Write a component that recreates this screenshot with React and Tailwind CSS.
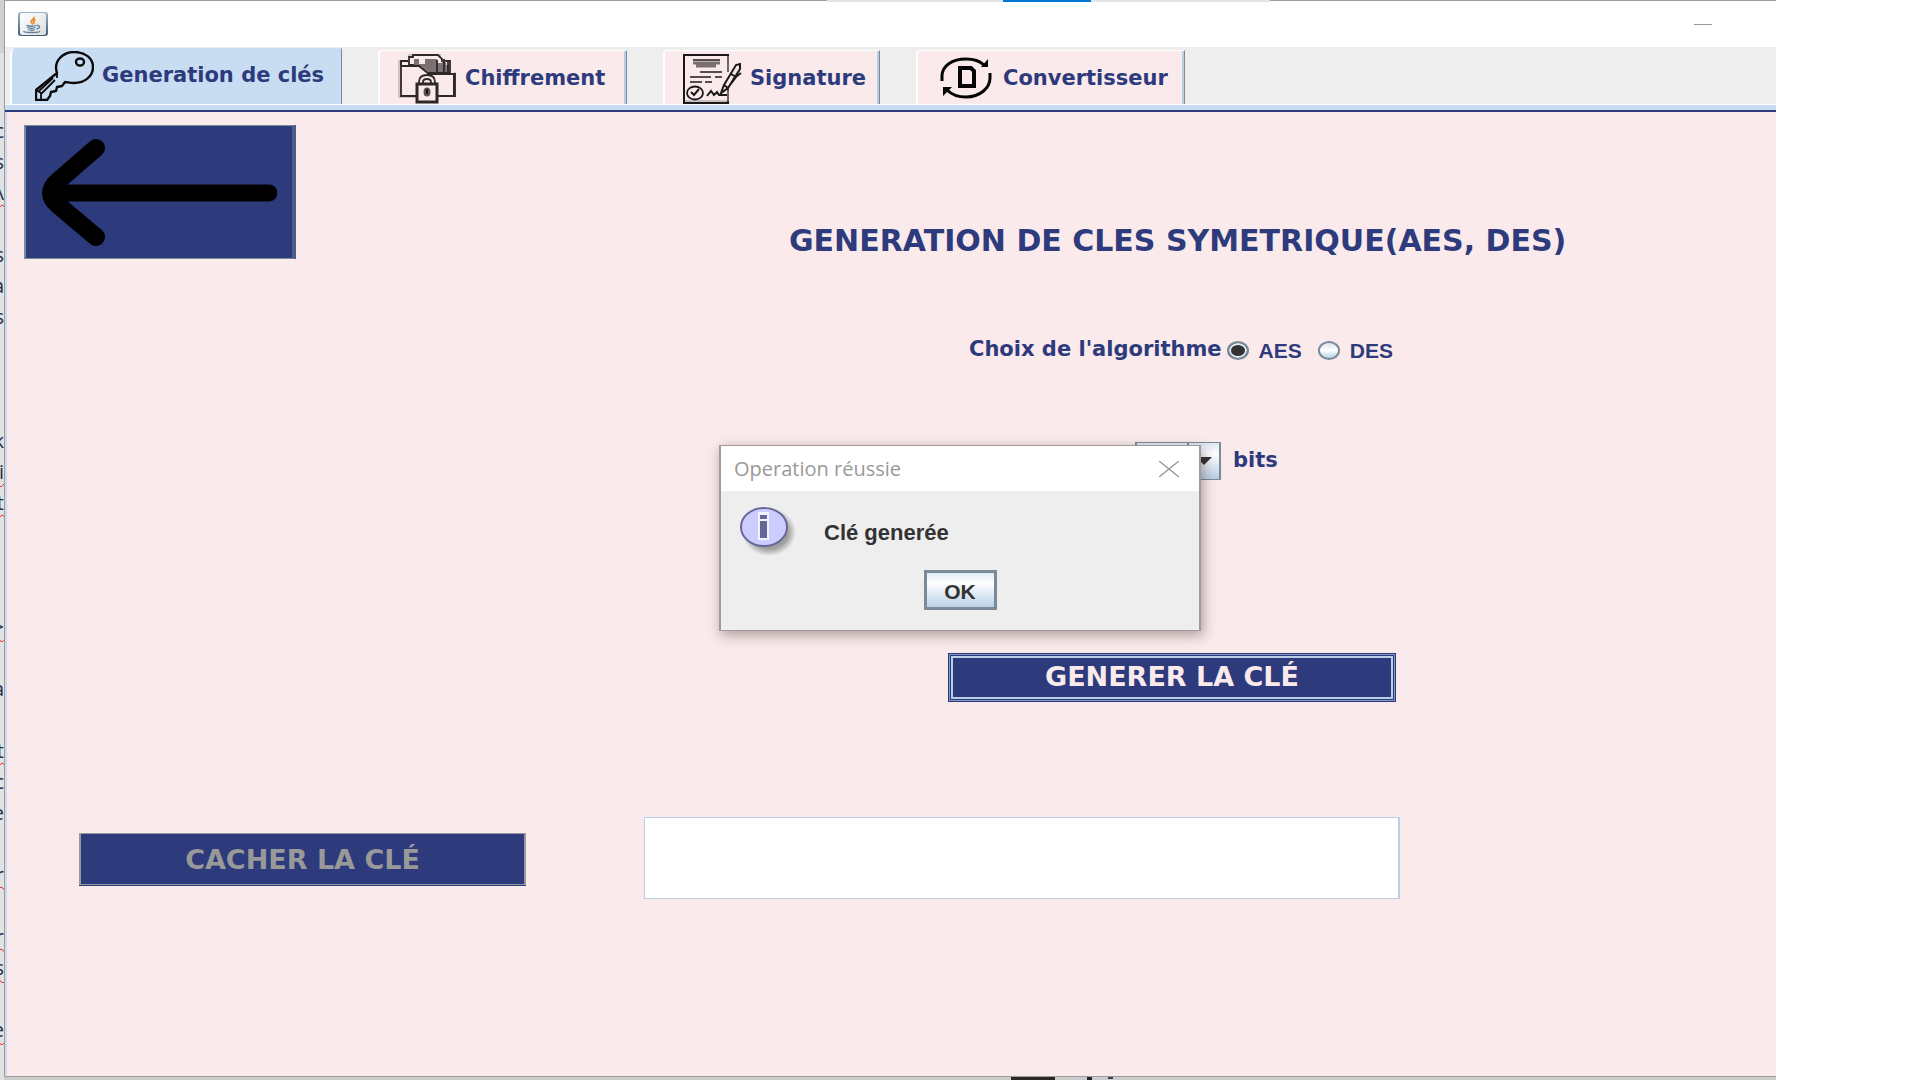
import React, { useState } from 'react';

function JavaIcon() {
  return (
    <svg width="30" height="24" viewBox="0 0 30 24" aria-hidden="true">
      <defs>
        <linearGradient id="java-frame" x1="0" y1="0" x2="0" y2="1">
          <stop offset="0" stopColor="#9db8ce" />
          <stop offset="1" stopColor="#3f5b75" />
        </linearGradient>
        <linearGradient id="java-face" x1="0" y1="0" x2="1" y2="1">
          <stop offset="0" stopColor="#ffffff" />
          <stop offset="1" stopColor="#dcdcdc" />
        </linearGradient>
      </defs>
      <rect width="30" height="24" rx="3" fill="url(#java-frame)" />
      <rect x="2" y="1" width="26" height="22" rx="2" fill="url(#java-face)" />
      <path d="M15.500 5c2 2-3.500 3-2 5.500l1.500 2M17.500 7.500c-3 1.500-1.500 2.500-1 4" fill="none" stroke="#f08a2c" strokeWidth="1.800" />
      <path d="M8.500 13.500q6 1.500 9.500 0M9 15.500q5 1.500 8.500 0M10 17.500q4 1.500 7 0M18.500 13.500c4-1 4 2.500 0 3.500M6 19q-1 1.500 8 1.500t7.500-1.500" fill="none" stroke="#5b7f9c" strokeWidth="1.300" />
    </svg>
  );
}

function KeyIcon() {
  return (
    <svg width="59" height="50" viewBox="0 0 59 50" fill="none" stroke="#0b0b0b" strokeWidth="2.400" strokeLinejoin="round" aria-hidden="true">
      <path d="M22 22C18 10 28 1 39 1s19 6 19 15-8 16-19 16c-4 0-7-1-9-1l-3 4-5 1-1 4-5 1-1 4-3 4H1V39Z" />
      <path d="M22 22v5M18 27 4 40M20 29 6 43v5M1 39l5 3" strokeWidth="1.800" />
      <ellipse cx="45" cy="11" rx="4" ry="3.500" />
    </svg>
  );
}

function FolderLockIcon() {
  return (
    <svg width="59" height="50" viewBox="0 0 59 50" fill="none" stroke="#2e2829" strokeWidth="1.800" aria-hidden="true">
      <path d="M1 6v37h17M57 18v25M10 1h33" stroke="#cfc3c4" strokeWidth="2" />
      <path d="M11 11V3h4V1h25l4 4v2h8v12H29L20 11Z" fill="#faeaeb" />
      <path d="M16 5h5v5h6V5h12v4h5V7h4v4h3v7H30l-7-6h-7Z" fill="#7b7072" stroke="none" />
      <path d="M39 6v12M46 5v13M50 8v10" />
      <path d="M3 42V12h18l10 8h26v22Z" fill="#faeaeb" />
      <path d="M3 12V7h7M56 19v23" strokeWidth="2" />
      <path d="M21 31v-3q0-7 8-7t8 7v3M25 31v-3q0-3 4-3t4 3v3" fill="#faeaeb" />
      <rect x="19" y="30" width="20" height="18" fill="#faeaeb" strokeWidth="3" />
      <ellipse cx="29" cy="38" rx="3.500" ry="4.500" fill="#5b5254" stroke="none" />
      <path d="M29 35v5" stroke="#1b1718" strokeWidth="2" />
    </svg>
  );
}

function SignatureIcon() {
  return (
    <svg width="59" height="50" viewBox="0 0 59 50" fill="none" stroke="#1c1819" strokeWidth="2" aria-hidden="true">
      <path d="M45 18V1H1v48h44V35" />
      <path d="M2 47h42" stroke="#c9bfc0" strokeWidth="2" />
      <path d="M45 2v16M45 36v11" stroke="#6f6667" strokeWidth="2" />
      <g stroke="#544c4e">
        <path d="M10 6h27" strokeWidth="2" />
        <path d="M10 9h27M13 12h20" stroke="#7a7072" strokeWidth="3" />
        <path d="M17 18h22M7 23h21M32 23h7M7 28h12M22 28h7" strokeWidth="2" />
      </g>
      <ellipse cx="12" cy="39" rx="8" ry="6.500" strokeWidth="1.800" />
      <path d="m8 38 3 3 5-6M24 42l4-5 3 4 3-3 2 3h8" strokeWidth="2" />
      <path d="m38 39 3-8L53 11l4-1v5L45 34ZM41 31l4 3M48 20l5 3-9 12M50 25l8-6" fill="#faeaeb" strokeWidth="2" />
    </svg>
  );
}

function ConvertIcon() {
  return (
    <svg width="59" height="50" viewBox="0 0 59 50" fill="none" stroke="#050505" strokeWidth="3" aria-hidden="true">
      <path d="M6 22C6 12 16 5 30 5c8 0 14 2 18 6M54 24c0 10-10 19-24 19-8 0-15-3-19-7M6 21v6M54 19v6" />
      <path d="M45 13h7V5ZM7 33h9l-9 9Z" fill="#050505" stroke="none" />
      <path d="M24 14h11l3 3v15H24Z" strokeWidth="4" />
    </svg>
  );
}

function ArrowIcon() {
  return (
    <svg width="236" height="108" viewBox="0 0 236 108" fill="none" stroke="#000" strokeWidth="18" strokeLinecap="round" strokeLinejoin="round" aria-hidden="true">
      <path d="M55 10 17 43Q3 55 17 67L55 99" />
      <path d="M14 55H228" strokeWidth="17" />
    </svg>
  );
}

function InfoIcon() {
  return (
    <svg width="56" height="50" viewBox="0 0 56 50" aria-hidden="true">
      <defs>
        <radialGradient id="info-shadow">
          <stop offset="0.700" stopColor="#8a8a8a" stopOpacity="0.800" />
          <stop offset="1" stopColor="#8a8a8a" stopOpacity="0" />
        </radialGradient>
      </defs>
      <ellipse cx="29" cy="25" rx="27" ry="24" fill="url(#info-shadow)" />
      <ellipse cx="24" cy="20" rx="23" ry="19" fill="#ccccff" stroke="#666699" strokeWidth="2" />
      <path d="M18 5h11v8H18zM18 13h11v20H18z" fill="#f2f2ff" />
      <path d="M20 8h7v4h-7zM20 14h7v17h-7z" fill="#666699" />
    </svg>
  );
}

const tabs = [
  { label: 'Generation de clés', Icon: KeyIcon, width: 'w-[332px]' },
  { label: 'Chiffrement', Icon: FolderLockIcon, width: 'w-[249px]' },
  { label: 'Signature', Icon: SignatureIcon, width: 'w-[217px]' },
  { label: 'Convertisseur', Icon: ConvertIcon, width: 'w-[269px]' },
];

const editorLines = [
  ['c'], ['s'], ['\\', 1], [''], ['s'], ['a'], ['s'], [''], [''], [''],
  ['k'], ['i', 1], ['t', 1], [''], [''], [''], ['>', 1], [''], ['a'], [''],
  ['t', 1], ['c'], ['e'], [''], ['r', 1], [''], ['r', 1], ['s', 1], [''], ['e', 1],
];

function EditorEdge() {
  return (
    <div className="w-1 shrink-0 overflow-hidden bg-[#e2e2e2]" aria-hidden="true">
      <div className="mb-[62px] h-[53px] bg-[#cfd1d4]" />
      {editorLines.map(([char, misspelt], i) => (
        <div key={i} className="flex h-[31px] justify-end overflow-hidden font-['Open_Sans',sans-serif] text-[20px] font-medium leading-[32px] text-[#26304a]">
          <span className={misspelt ? 'underline decoration-[#ee1111] decoration-wavy decoration-1 underline-offset-4' : ''}>{char}</span>
        </div>
      ))}
    </div>
  );
}

function TabBar({ active, onSelect }) {
  return (
    <div role="tablist" className="flex h-[57px] items-end gap-9 bg-[#eeeeee] pl-[5px]">
      {tabs.map(({ label, Icon, width }, i) => (
        <button
          key={label}
          type="button"
          role="tab"
          aria-selected={i === active}
          onClick={() => onSelect(i)}
          className={`flex shrink-0 items-center gap-2 whitespace-nowrap border-l-2 border-t border-r border-white border-r-[#7a8a99] ${width} ${
            i === active
              ? 'h-14 rounded-tl-md border-t-[#c8ddf2] bg-[#c8ddf2] pb-[2px] pl-[23px]'
              : 'h-[54px] rounded-tl-sm bg-[#faeaeb] pl-[18px] pt-[2px] shadow-[inset_-2px_0_0_#b8cfe5]'
          }`}
        >
          <Icon />
          <span>{label}</span>
        </button>
      ))}
    </div>
  );
}

function AlgorithmRadio({ label, checked, onChange }) {
  return (
    <label className="flex items-center gap-[10px] pt-[3px] font-['Liberation_Sans',sans-serif] text-[21px]">
      <input
        type="radio"
        name="algorithm"
        checked={checked}
        onChange={onChange}
        className="h-[19px] w-[22px] appearance-none rounded-[50%] border-2 border-[#7a8a99] bg-linear-to-b from-[#dbe6f1] via-white to-[#b8cfe5] checked:bg-none checked:bg-[#333333] checked:shadow-[inset_0_0_0_2px_#e4edf6]"
      />
      {label}
    </label>
  );
}

function ResultDialog() {
  return (
    <div role="dialog" aria-labelledby="dialog-title" className="absolute left-[712px] top-[333px] w-[482px] border-2 border-t border-b border-[#9f9a9b] bg-[#eeeeee] shadow-[2px_4px_12px_rgba(60,30,30,0.4)]">
      <div className="flex h-[45px] items-center justify-between bg-white pl-[13px] pr-5">
        <h2 id="dialog-title" className="font-['Open_Sans',sans-serif] text-[20px] font-normal text-[#999999]">Operation réussie</h2>
        <button type="button" aria-label="Fermer">
          <svg width="20" height="16" viewBox="0 0 20 16" stroke="#8f8f8f" strokeWidth="1.300" aria-hidden="true">
            <path d="m0 0 20 16M20 0 0 16" />
          </svg>
        </button>
      </div>
      <div className="flex h-[79px] gap-7 pl-[19px] pt-4 font-['Liberation_Sans',sans-serif] font-bold text-[#333333]">
        <InfoIcon />
        <p className="pt-3 text-[22px] leading-[28px]">Clé generée</p>
      </div>
      <div className="flex justify-center pb-5">
        <button type="button" className="h-10 w-[73px] border-2 border-[#7a8a99] bg-linear-to-b from-[#dde8f3] via-white via-30% to-[#b8cfe5] pt-1 font-['Liberation_Sans',sans-serif] text-[21px] leading-[32px] font-bold text-[#333333] shadow-[inset_0_0_0_1px_#7a8a99]">
          OK
        </button>
      </div>
    </div>
  );
}

function KeyGenerationPanel() {
  const [algorithm, setAlgorithm] = useState('AES');
  return (
    <main className="relative flex-1 border-l-2 border-[#c8ddf2] bg-[#faeaeb] pt-[13px]">
      <div className="flex items-end pl-[17px]">
        <button type="button" aria-label="Retour" className="flex h-[134px] w-[272px] shrink-0 items-center justify-center border-2 border-y border-r-4 border-[#7a8a99] border-r-[#4b5b8a] bg-[#2d3a7c]">
          <ArrowIcon />
        </button>
        <h1 className="ml-[493px] whitespace-nowrap text-[30px] leading-[36px]">GENERATION DE CLES SYMETRIQUE(AES, DES)</h1>
      </div>

      <div role="radiogroup" aria-labelledby="algorithm-label" className="mt-[73px] flex items-center pl-[962px]">
        <span id="algorithm-label" className="pr-[5px] leading-[32px]">Choix de l'algorithme</span>
        <div className="flex gap-4">
          <AlgorithmRadio label="AES" checked={algorithm === 'AES'} onChange={() => setAlgorithm('AES')} />
          <AlgorithmRadio label="DES" checked={algorithm === 'DES'} onChange={() => setAlgorithm('DES')} />
        </div>
      </div>

      <div className="mt-[75px] flex items-center gap-3 pl-[1128px]">
        <div className="flex border-2 border-y border-[#7a8a99] bg-linear-to-b from-[#dde8f3] via-white via-30% to-[#b8cfe5]">
          <select id="key-size" className="h-9 w-[52px] appearance-none border-r-2 border-[#7a8a99] text-transparent">
            <option value="128" aria-label="128" />
          </select>
          <svg width="30" height="36" viewBox="0 0 30 36" aria-hidden="true">
            <path d="M7 14h16l-8 8Z" fill="#333333" />
          </svg>
        </div>
        <label htmlFor="key-size">bits</label>
      </div>

      <div className="mt-[174px] pl-[942px]">
        <button type="button" className="h-[47px] w-[446px] border border-[#7a9ac0] bg-[#2d3a7c] text-[27px] leading-[44px] text-[#faeaeb] shadow-[inset_0_0_0_1px_#2d3a7c,inset_0_0_0_3px_#b8cfe5,0_0_0_1px_#2d3a7c]">
          GENERER LA CLÉ
        </button>
      </div>

      <div className="mt-[116px] flex items-center pl-[72px]">
        <button type="button" disabled className="mt-0.5 h-[52px] w-[447px] shrink-0 border-2 border-y border-[#999999] bg-[#2d3a7c] pt-[2px] text-[27px] leading-[48px] text-[#999999] shadow-[0_1px_0_#2d3a7c]">
          CACHER LA CLÉ
        </button>
        <input type="text" aria-label="Clé" className="ml-[118px] h-[82px] w-[756px] border border-r-2 border-[#b8cfe5] bg-white px-2 outline-none" />
      </div>

      <ResultDialog />
    </main>
  );
}

export default function App() {
  const [active, setActive] = useState(0);
  return (
    <div className="relative flex h-screen bg-white font-['DejaVu_Sans',sans-serif] text-[21px] font-bold text-[#2d3a7c]">
      <EditorEdge />
      <div className="flex min-w-0 flex-1 flex-col overflow-hidden">
        <div className="flex flex-1 flex-col border-b border-l border-t border-[#9c9c9c]">
          <header className="flex h-[46px] items-center justify-between bg-white pl-[13px] pr-16">
            <JavaIcon />
            <button type="button" aria-label="Réduire" className="flex h-6 items-center">
              <span className="block h-px w-[18px] bg-[#999999]" />
            </button>
          </header>
          <TabBar active={active} onSelect={setActive} />
          <div className="h-[6px] border-t border-white bg-[#c8ddf2]" />
          <div className="h-[2px] bg-[#2d3a7c]" />
          <KeyGenerationPanel />
        </div>
        <div className="flex h-[3px] bg-[#cccccc] pl-[1007px]" aria-hidden="true">
          <span className="w-11 bg-[#2b2727]" />
          <span className="ml-8 w-[5px] bg-[#1f2430]" />
          <span className="ml-4 h-[2px] w-[5px] bg-[#3a4050]" />
        </div>
      </div>
      <div className="w-36 shrink-0 bg-white" />
      <div className="absolute left-[827px] top-0 flex h-[2px] w-[443px] bg-[#e5e5e5] pl-44" aria-hidden="true">
        <span className="w-[88px] bg-[#0078d7]" />
      </div>
    </div>
  );
}
